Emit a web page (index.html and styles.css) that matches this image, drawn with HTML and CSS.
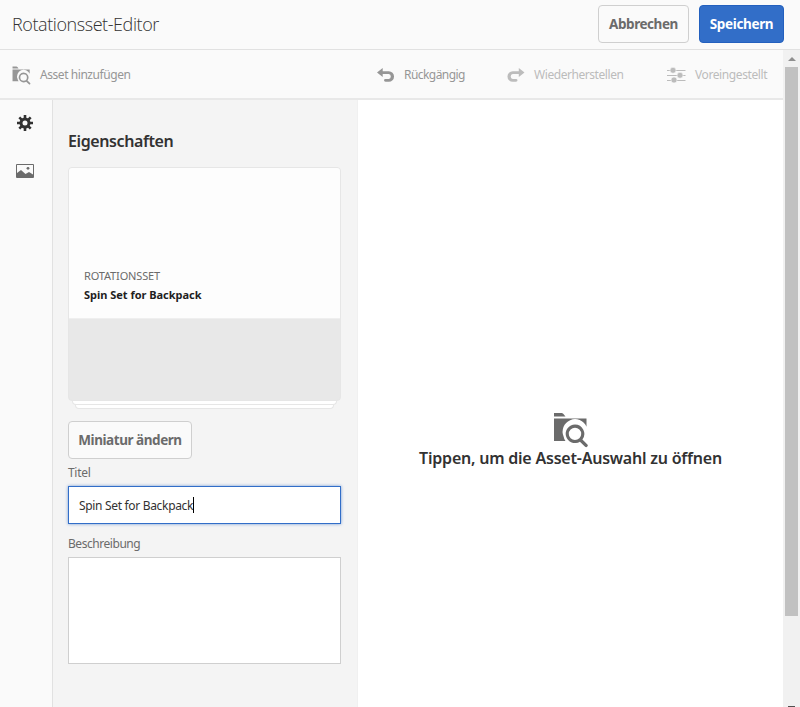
FILE: index.html
```
<!DOCTYPE html>
<html lang="de">
<head>
<meta charset="utf-8">
<title>Rotationsset-Editor</title>
<link rel="stylesheet" href="styles.css">
</head>
<body>
<svg width="0" height="0" class="defs">
  <symbol id="folder-search" viewBox="0 0 36 36">
    <path fill="currentColor" d="M1 1h7.500q1 0 1.700.8L12.500 4.500H1zM1 6.500h32.500v8.200A12 12 0 0 0 10.600 24.500Q11 27 12.500 29H1z"/>
    <path fill="currentColor" fill-rule="evenodd" d="M22 12.500a9.300 9.300 0 1 0 4.900 17.200l5.200 5.100q1.200.8 2.200-.2t.1-2.200l-5-5A9.300 9.300 0 0 0 22 12.500zm0 3.200a6.200 6.200 0 1 1 0 12.400 6.200 6.200 0 0 1 0-12.400z"/>
  </symbol>
</svg>
<header class="header">
  <h1>Rotationsset-Editor</h1>
  <button class="btn cancel">Abbrechen</button>
  <button class="btn primary">Speichern</button>
</header>
<div class="view">
  <div class="content">
    <nav class="toolbar">
      <a class="tool add"><svg width="19" height="19"><use href="#folder-search"/></svg><span>Asset hinzufügen</span></a>
      <a class="tool undo"><svg width="18" height="16" viewBox="0 0 18 16"><path fill="currentColor" d="M0 5.500 5.700 1v3.200h6.100a5.200 5.200 0 0 1 0 10.500H8.500q-1.500 0-1.500-1.400t1.500-1.400h3.300a2.500 2.500 0 0 0 0-4.900H5.700V10z"/></svg><span>Rückgängig</span></a>
      <a class="tool off redo"><svg width="18" height="16" viewBox="0 0 18 16"><path fill="currentColor" d="M17.500 5.500 11.800 1v3.200H5.700a5.200 5.200 0 0 0 0 10.500H9q1.500 0 1.500-1.400T9 11.900H5.700a2.500 2.500 0 0 1 0-4.900h6.100V10z"/></svg><span>Wiederherstellen</span></a>
      <a class="tool off preset"><svg width="19" height="16" viewBox="0 0 19 16"><path stroke="currentColor" d="M0 3.500h18.500M0 8.500h18.500M0 13.500h18.500"/><g fill="currentColor" stroke="#fafafa" stroke-width=".6"><circle cx="6" cy="3.300" r="3"/><circle cx="13" cy="8.300" r="3"/><circle cx="7" cy="13" r="3"/></g></svg><span>Voreingestellt</span></a>
    </nav>
    <div class="workspace">
      <aside class="rail">
        <svg class="gear" width="16" height="16" viewBox="-8 -8 16 16"><g stroke="#323232" stroke-width="2.600"><path d="M0-8v4M0 8V4M-8 0h4M8 0H4M-5.700-5.700l3 3M5.700 5.700l-3-3M5.700-5.700l-3 3M-5.700 5.700l3-3"/></g><circle r="4" fill="none" stroke="#323232" stroke-width="3"/></svg>
        <svg width="18" height="14" viewBox="0 0 18 14"><path fill="#fafafa" stroke="#6b6b6b" d="M.5.500h17v13H.500z"/><path fill="#6b6b6b" d="M1 9 5 6l4.500 4L13 8l4 2.500V13H1z"/><circle cx="12" cy="4.300" r="1.400" fill="#6b6b6b"/></svg>
      </aside>
      <section class="panel">
        <h2>Eigenschaften</h2>
        <div class="stack">
          <article class="card">
            <div class="info"><span class="kind">ROTATIONSSET</span><strong>Spin Set for Backpack</strong></div>
          </article>
          <div class="sheet one"></div>
          <div class="sheet two"></div>
        </div>
        <button class="btn thumb">Miniatur ändern</button>
        <label class="l-title">Titel</label>
        <div class="field"><span>Spin Set for Backpack</span><i class="caret"></i></div>
        <label class="l-desc">Beschreibung</label>
        <div class="area"></div>
      </section>
      <main class="drop">
        <svg width="36" height="36"><use href="#folder-search"/></svg>
        <p>Tippen, um die Asset-Auswahl zu öffnen</p>
      </main>
    </div>
  </div>
  <div class="scroll"><i class="up"></i><i class="handle"></i><i class="down"></i></div>
</div>
</body>
</html>
```
FILE: styles.css
```
* { box-sizing: border-box; }
body { margin: 0; width: 800px; height: 707px; overflow: hidden; background: #fafafa; color: #323232; font: 12px/18px "Noto Sans", "Open Sans", sans-serif; }
.defs { display: none; }
svg { display: block; flex: none; }
h1, h2, p { margin: 0; white-space: nowrap; }
.header { height: 50px; display: flex; align-items: flex-start; padding: 5px 16px 0 12px; border-bottom: 1px solid #e1e1e1; }
h1 { flex: 1; font: 300 18px/38px "Open Sans", sans-serif; letter-spacing: -.42px; }
.btn { height: 38px; padding: 0; border: 1px solid #cfcfcf; border-radius: 4px; background: #fafafa; color: #6b6b6b; font: 700 13.500px/34px "Noto Sans", sans-serif; letter-spacing: -.45px; white-space: nowrap; }
.cancel { width: 91px; }
.primary { width: 85px; margin-left: 10px; background: #326ec8; border-color: #2360be; color: #fff; letter-spacing: -.35px; }
.view { display: flex; height: 657px; }
.content { width: 783px; display: flex; flex-direction: column; }
.toolbar { height: 50px; display: flex; align-items: center; border-bottom: 2px solid #e8e8e8; padding: 2px 0 0 12px; }
.tool { display: flex; align-items: center; color: #969696; letter-spacing: -.44px; white-space: nowrap; }
.off { color: #bcbcbc; }
.add { width: 365px; gap: 9px; }
.undo { width: 130px; gap: 9px; letter-spacing: -.55px; }
.redo { width: 160px; gap: 9px; }
.preset { gap: 9px; letter-spacing: -.4px; }
.workspace { flex: 1; display: flex; }
.rail { width: 53px; border-right: 1px solid #e1e1e1; padding: 14px 0 0 16px; }
.gear { margin: 1px 0 33px 1px; }
.panel { width: 305px; background: #f4f4f4; padding: 28px 16px 0 15px; border-right: 1px solid #f0f0f0; }
h2 { font: 600 16px/26px "Noto Sans", sans-serif; letter-spacing: -.4px; }
.stack { margin-top: 13px; }
.card { width: 273px; height: 234px; border: 1px solid #e6e6e6; border-radius: 4px; background: #e8e8e8; overflow: hidden; }
.info { height: 151px; padding: 98px 15px 0; background: #fdfdfd; border-bottom: 1px solid #efefef; display: flex; flex-direction: column; }
.kind { color: #6b6b6b; font-size: 11px; line-height: 19px; letter-spacing: -.15px; }
.info strong { font-size: 11px; line-height: 19px; letter-spacing: -.02px; color: #1f1f1f; }
.sheet { height: 4px; border: 1px solid #e6e6e6; border-top: 0; background: #fff; border-radius: 0 0 4px 4px; }
.one { margin: 0 4px; }
.two { margin: 0 7px; }
.thumb { display: block; width: 124px; margin-top: 12px; }
label { display: block; color: #6b6b6b; letter-spacing: -.45px; }
.l-title { margin-top: 5px; letter-spacing: -.3px; }
.field { display: flex; align-items: center; height: 38px; margin-top: 4px; padding: 2px 0 0 10px; background: #fff; border: 1px solid #326ec8; box-shadow: 0 0 3px #326ec8aa; letter-spacing: -.32px; width: 273px; }
.caret { width: 1px; height: 16px; margin-top: -2px; background: #000; }
.l-desc { margin-top: 11px; }
.area { margin-top: 4px; height: 107px; border: 1px solid #cfcfcf; background: #fff; width: 273px; }
.drop { flex: 1; background: #fff; display: flex; flex-direction: column; align-items: center; padding-top: 312px; }
.drop svg { color: #6b6b6b; }
.drop p { font: 600 16px/20px "Noto Sans", sans-serif; letter-spacing: -.22px; }
.scroll { width: 17px; background: #f1f1f1; display: flex; flex-direction: column; align-items: center; }
.up { margin-top: 7px; border: 4px solid transparent; border-top: 0; border-bottom-color: #8f8f8f; }
.handle { margin-top: 6px; width: 13px; height: 549px; background: #c1c1c1; }
.down { margin-top: 90px; width: 7px; height: 1px; background: #505050; }
```
